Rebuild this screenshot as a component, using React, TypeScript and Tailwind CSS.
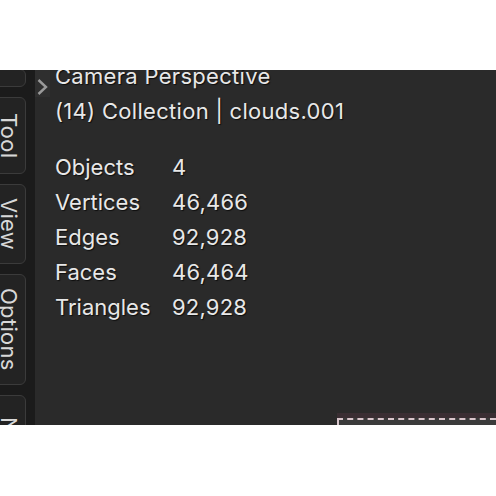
import React from "react";

const stats: [string, string][] = [
  ["Objects", "4"],
  ["Vertices", "46,466"],
  ["Edges", "92,928"],
  ["Faces", "46,464"],
  ["Triangles", "92,928"],
];

const tabs = [
  { label: "", h: "h-[18px]" },
  { label: "Tool", h: "h-[77px]" },
  { label: "View", h: "h-[80px]" },
  { label: "Options", h: "h-[111px]" },
  { label: "N", h: "h-[60px]" },
];

export default function App() {
  return (
    <div
      className="w-[496px] h-[496px] bg-white flex flex-col"
      style={{ fontFamily: "Inter, 'DejaVu Sans', sans-serif" }}
    >
      <div className="h-[70px]" />
      <div className="h-[355px] flex overflow-hidden bg-[#2a2a2a]">
        {/* sidebar tabs */}
        <div className="w-[35px] bg-[#1b1b1b] flex flex-col gap-[10px] pr-[9px] -mt-px overflow-hidden">
          {tabs.map((t, i) => (
            <div
              key={i}
              className={`${t.h} w-[34px] -ml-[8px] shrink-0 bg-[#232323] border border-[#3b3b3b] rounded-[6px] flex items-center justify-center`}
            >
              <span className="[writing-mode:vertical-rl] text-[22px] leading-none tracking-[0.3px] text-[#d8d8d8]">
                {t.label}
              </span>
            </div>
          ))}
        </div>

        {/* viewport */}
        <div className="flex-1 flex flex-col">
          <div className="flex-1 flex">
            <div className="w-[15px] h-[27px] bg-[#2f2f2f] flex items-end justify-center pb-[1px]">
              <svg width="13" height="18" viewBox="0 0 13 18">
                <path d="M2.5 2 L10 9 L2.5 16" stroke="#9a9a9a" strokeWidth="2.4" fill="none" />
              </svg>
            </div>
            <div className="pl-[5px] -mt-[11px] text-[22px] tracking-[0.3px] text-[#e8e8e8] [text-shadow:1px_1px_1px_rgba(0,0,0,0.7)]">
              <div className="h-[35px] leading-[35px]">Camera Perspective</div>
              <div className="h-[35px] leading-[35px]">(14) Collection | clouds.001</div>
              <div className="h-[21px]" />
              {stats.map(([k, v]) => (
                <div key={k} className="h-[35px] leading-[35px] flex">
                  <span className="w-[117px] tracking-[0px]">{k}</span>
                  <span className="tracking-[0.2px]">{v}</span>
                </div>
              ))}
            </div>
          </div>
          <div className="flex justify-end">
            <div className="w-[159px] h-[5px] bg-[#3a2e33]" />
          </div>
          <div className="flex justify-end">
            <div className="w-[159px] h-[7px] bg-[#3b3b3b] border-t-2 border-l-2 border-dashed border-[#d9c6cc]" />
          </div>
        </div>
      </div>
    </div>
  );
}
